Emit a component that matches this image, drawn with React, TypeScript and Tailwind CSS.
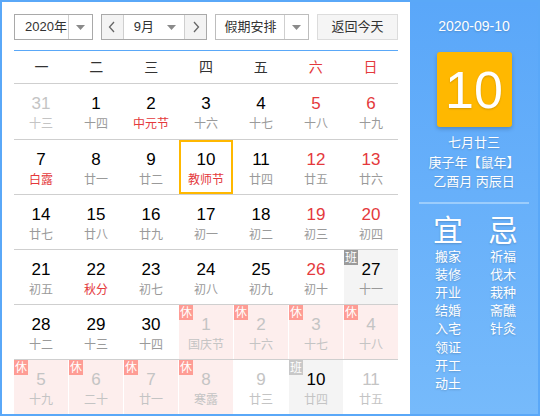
import React from "react";

type Cell = {
  day: number;
  lunar: string;
  other?: boolean;
  fest?: boolean;
  rest?: boolean;
  work?: boolean;
  today?: boolean;
};

const rows: Cell[][] = [
  [
    { day: 31, lunar: "十三", other: true },
    { day: 1, lunar: "十四" },
    { day: 2, lunar: "中元节", fest: true },
    { day: 3, lunar: "十六" },
    { day: 4, lunar: "十七" },
    { day: 5, lunar: "十八" },
    { day: 6, lunar: "十九" },
  ],
  [
    { day: 7, lunar: "白露", fest: true },
    { day: 8, lunar: "廿一" },
    { day: 9, lunar: "廿二" },
    { day: 10, lunar: "教师节", fest: true, today: true },
    { day: 11, lunar: "廿四" },
    { day: 12, lunar: "廿五" },
    { day: 13, lunar: "廿六" },
  ],
  [
    { day: 14, lunar: "廿七" },
    { day: 15, lunar: "廿八" },
    { day: 16, lunar: "廿九" },
    { day: 17, lunar: "初一" },
    { day: 18, lunar: "初二" },
    { day: 19, lunar: "初三" },
    { day: 20, lunar: "初四" },
  ],
  [
    { day: 21, lunar: "初五" },
    { day: 22, lunar: "秋分", fest: true },
    { day: 23, lunar: "初七" },
    { day: 24, lunar: "初八" },
    { day: 25, lunar: "初九" },
    { day: 26, lunar: "初十" },
    { day: 27, lunar: "十一", work: true },
  ],
  [
    { day: 28, lunar: "十二" },
    { day: 29, lunar: "十三" },
    { day: 30, lunar: "十四" },
    { day: 1, lunar: "国庆节", other: true, rest: true },
    { day: 2, lunar: "十六", other: true, rest: true },
    { day: 3, lunar: "十七", other: true, rest: true },
    { day: 4, lunar: "十八", other: true, rest: true },
  ],
  [
    { day: 5, lunar: "十九", other: true, rest: true },
    { day: 6, lunar: "二十", other: true, rest: true },
    { day: 7, lunar: "廿一", other: true, rest: true },
    { day: 8, lunar: "寒露", other: true, rest: true },
    { day: 9, lunar: "廿三", other: true },
    { day: 10, lunar: "廿四", other: true, work: true },
    { day: 11, lunar: "廿五", other: true },
  ],
];

const weekdays = ["一", "二", "三", "四", "五", "六", "日"];
const yi = ["搬家", "装修", "开业", "结婚", "入宅", "领证", "开工", "动土"];
const ji = ["祈福", "伐木", "栽种", "斋醮", "针灸"];

const Caret = () => (
  <svg width="9" height="5" viewBox="0 0 9 5">
    <path d="M0 0h9L4.5 5z" fill="#8a8a8a" />
  </svg>
);

const DayCell = ({ c, col }: { c: Cell; col: number }) => {
  const weekend = col >= 5;
  let numColor = "text-black";
  if (c.other && !c.work) numColor = "text-[#c4c4c4]";
  else if (weekend && !c.work) numColor = "text-[#e4393c]";
  let lunarColor = "text-[#9a9a9a]";
  if (c.other) lunarColor = "text-[#c4c4c4]";
  else if (c.fest) lunarColor = "text-[#e4393c]";
  const bg = c.rest ? "bg-[#fdeeed]" : c.work ? "bg-[#f4f4f4]" : "bg-white";
  return (
    <div
      className={`relative flex h-full flex-col items-center pt-[9px] ${bg} ${
        c.today ? "shadow-[inset_0_0_0_2px_#ffb800]" : ""
      }`}
    >
      {c.rest && (
        <span className="absolute left-0 top-0 flex h-[15px] w-[14px] items-center justify-center bg-[#fe9c94] text-[12px] leading-none text-white">
          休
        </span>
      )}
      {c.work && (
        <span
          className={`absolute left-0 top-0 flex h-[15px] w-[14px] items-center justify-center text-[12px] leading-none text-white ${
            c.other ? "bg-[#c8c8c8]" : "bg-[#9a9a9a]"
          }`}
        >
          班
        </span>
      )}
      <span className={`text-[17px] leading-[22px] ${numColor}`}>{c.day}</span>
      <span className={`text-[12px] leading-[18px] ${lunarColor}`}>{c.lunar}</span>
    </div>
  );
};

export default function App() {
  return (
    <div
      className="h-[420px] w-[546px] bg-white"
      style={{ fontFamily: '"Liberation Sans", "Noto Sans CJK SC", sans-serif' }}
    >
      <div className="flex h-[416px] w-[540px] border-2 border-[#5aa8f8]">
        {/* calendar */}
        <div className="flex w-[408px] flex-col px-3 pt-3">
          <div className="flex h-[26px] gap-2 whitespace-nowrap text-[13px] text-[#333]">
            <div className="flex w-[79px] border border-[#a9a9a9]">
              <span className="flex flex-1 items-center pl-[10px]">2020年</span>
              <span className="flex w-[24px] items-center justify-center border-l border-[#cfcfcf]">
                <Caret />
              </span>
            </div>
            <div className="flex w-[107px] border border-[#a9a9a9]">
              <span className="flex w-[22px] items-center justify-center border-r border-[#cfcfcf] bg-[#f3f3f3]">
                <svg width="8" height="12" viewBox="0 0 8 12">
                  <path d="M6 1L1.5 6 6 11" fill="none" stroke="#666" strokeWidth="1.3" />
                </svg>
              </span>
              <span className="flex flex-1 items-center justify-between pl-[10px] pr-[8px]">
                9月
                <Caret />
              </span>
              <span className="flex w-[22px] items-center justify-center border-l border-[#cfcfcf] bg-[#f3f3f3]">
                <svg width="8" height="12" viewBox="0 0 8 12">
                  <path d="M2 1l4.5 5L2 11" fill="none" stroke="#666" strokeWidth="1.3" />
                </svg>
              </span>
            </div>
            <div className="flex w-[94px] border border-[#bdbdbd]">
              <span className="flex flex-1 items-center pl-[8px]">假期安排</span>
              <span className="flex w-[24px] shrink-0 items-center justify-center border-l border-[#cfcfcf]">
                <Caret />
              </span>
            </div>
            <button className="flex w-[81px] items-center justify-center border border-[#dcdcdc] bg-[#f5f5f5]">
              返回今天
            </button>
          </div>

          <div className="mt-[10px] h-px bg-[#5aa8f8]" />
          <div className="grid h-[33px] grid-cols-7 border-b border-[#cfcfcf] text-[14px]">
            {weekdays.map((w, i) => (
              <span
                key={w}
                className={`flex items-center justify-center ${i >= 5 ? "text-[#e4393c]" : "text-[#333]"}`}
              >
                {w}
              </span>
            ))}
          </div>

          {rows.map((r, ri) => (
            <div
              key={ri}
              className={`grid h-[55px] grid-cols-7 gap-x-px ${ri > 0 ? "border-t border-[#cfcfcf]" : "h-[54px]"}`}
            >
              {r.map((c, ci) => (
                <DayCell key={ci} c={c} col={ci} />
              ))}
            </div>
          ))}
        </div>

        {/* side panel */}
        <div className="flex flex-1 flex-col items-center bg-gradient-to-b from-[#5aa7f9] to-[#76bafb] pt-4 text-white [text-shadow:0_1px_2px_rgba(0,0,0,0.18)]">
          <div className="text-[14px] leading-[16px]">2020-09-10</div>
          <div className="mt-[18px] flex h-[75px] w-[75px] items-center justify-center rounded-[3px] bg-[#ffb800] text-[52px] font-light leading-none shadow-[0_2px_4px_rgba(0,0,0,0.2)]">
            10
          </div>
          <div className="mt-[6px] flex flex-col items-center text-[13px] leading-[19.5px]">
            <span>七月廿三</span>
            <span>庚子年【鼠年】</span>
            <span>乙酉月 丙辰日</span>
          </div>
          <div className="mt-[10px] h-[2px] w-[110px] bg-[#9ccdfc]" />
          <div className="ml-[3px] mt-3 grid w-[110px] grid-cols-2">
            <div className="flex flex-col items-center">
              <span className="text-[30px] leading-[30px]">宜</span>
              <div className="mt-[2px] flex flex-col text-[13px] leading-[18.2px]">
                {yi.map((t) => (
                  <span key={t}>{t}</span>
                ))}
              </div>
            </div>
            <div className="flex flex-col items-center">
              <span className="text-[30px] leading-[30px]">忌</span>
              <div className="mt-[2px] flex flex-col text-[13px] leading-[18.2px]">
                {ji.map((t) => (
                  <span key={t}>{t}</span>
                ))}
              </div>
            </div>
          </div>
        </div>
      </div>
    </div>
  );
}
